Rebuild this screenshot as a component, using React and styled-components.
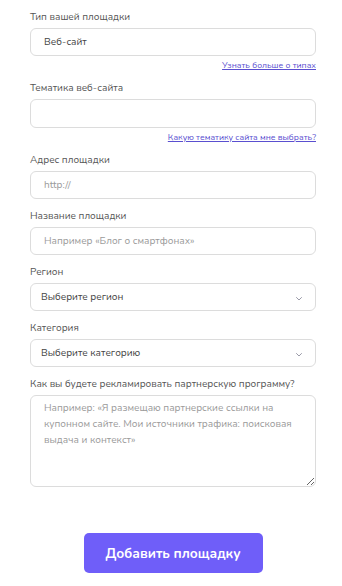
import React from "react";
import styled, { createGlobalStyle } from "styled-components";

const GlobalStyle = createGlobalStyle`
  html, body {
    margin: 0;
    padding: 0;
    background: #fff;
    font-family: "Nunito", "Lato", "Noto Sans", sans-serif;
  }
  * { box-sizing: border-box; }
`;

const Form = styled.form`
  width: 286px;
  margin-left: 30px;
  padding-top: 10px;
  display: flex;
  flex-direction: column;
  gap: 10px;
`;

const Field = styled.div`
  display: flex;
  flex-direction: column;
`;

const Label = styled.label`
  font-size: 10px;
  line-height: 14px;
  color: #555;
  margin-bottom: 4px;
  white-space: nowrap;
`;

const Input = styled.input`
  width: 100%;
  height: ${(p) => p.$h || 28}px;
  border: 1px solid #dcdcdc;
  border-radius: 6px;
  padding: 0 13px;
  font-family: inherit;
  font-size: 10px;
  color: #444;
  background: #fff;
  outline: none;
  &::placeholder {
    color: #9a9a9a;
  }
`;

const HelpLink = styled.a`
  align-self: flex-end;
  margin-top: 3px;
  font-size: 8.7px;
  line-height: 12px;
  color: #5a4fd0;
  text-decoration: underline;
  cursor: pointer;
`;

const SelectBox = styled.div`
  height: 28px;
  border: 1px solid #dcdcdc;
  border-radius: 6px;
  padding: 0 12px 0 10px;
  display: flex;
  align-items: center;
  justify-content: space-between;
  font-size: 10px;
  color: #444;
  background: #fff;
  cursor: pointer;
`;

const Chevron = styled.svg`
  width: 8px;
  height: 8px;
  margin-top: 4px;
`;

const TextArea = styled.textarea`
  width: 100%;
  height: 92px;
  border: 1px solid #dcdcdc;
  border-radius: 6px;
  padding: 4px 13px;
  font-family: inherit;
  font-size: 10px;
  line-height: 16px;
  color: #444;
  resize: vertical;
  outline: none;
  &::placeholder {
    color: #9a9a9a;
  }
`;

const Submit = styled.button`
  align-self: center;
  margin-top: 36px;
  width: 179px;
  height: 40px;
  border: none;
  border-radius: 5px;
  background: #6f5ef9;
  color: #fff;
  font-family: inherit;
  font-size: 13.6px;
  font-weight: 700;
  cursor: pointer;
`;

function Select({ placeholder }) {
  return (
    <SelectBox>
      <span>{placeholder}</span>
      <Chevron viewBox="0 0 8 8" fill="none">
        <path d="M1.5 2.5 L4 5 L6.5 2.5" stroke="#9a9aa8" strokeWidth="1" strokeLinecap="round" />
      </Chevron>
    </SelectBox>
  );
}

export default function App() {
  return (
    <>
      <GlobalStyle />
      <Form onSubmit={(e) => e.preventDefault()}>
        <Field>
          <Label>Тип вашей площадки</Label>
          <Input defaultValue="Веб-сайт" />
          <HelpLink>Узнать больше о типах</HelpLink>
        </Field>
        <Field>
          <Label>Тематика веб-сайта</Label>
          <Input $h={29} />
          <HelpLink>Какую тематику сайта мне выбрать?</HelpLink>
        </Field>
        <Field>
          <Label>Адрес площадки</Label>
          <Input placeholder="http://" />
        </Field>
        <Field>
          <Label>Название площадки</Label>
          <Input placeholder="Например «Блог о смартфонах»" />
        </Field>
        <Field>
          <Label>Регион</Label>
          <Select placeholder="Выберите регион" />
        </Field>
        <Field>
          <Label>Категория</Label>
          <Select placeholder="Выберите категорию" />
        </Field>
        <Field>
          <Label>Как вы будете рекламировать партнерскую программу?</Label>
          <TextArea placeholder="Например: «Я размещаю партнерские ссылки на купонном сайте. Мои источники трафика: поисковая выдача и контекст»" />
        </Field>
        <Submit type="submit">Добавить площадку</Submit>
      </Form>
    </>
  );
}
